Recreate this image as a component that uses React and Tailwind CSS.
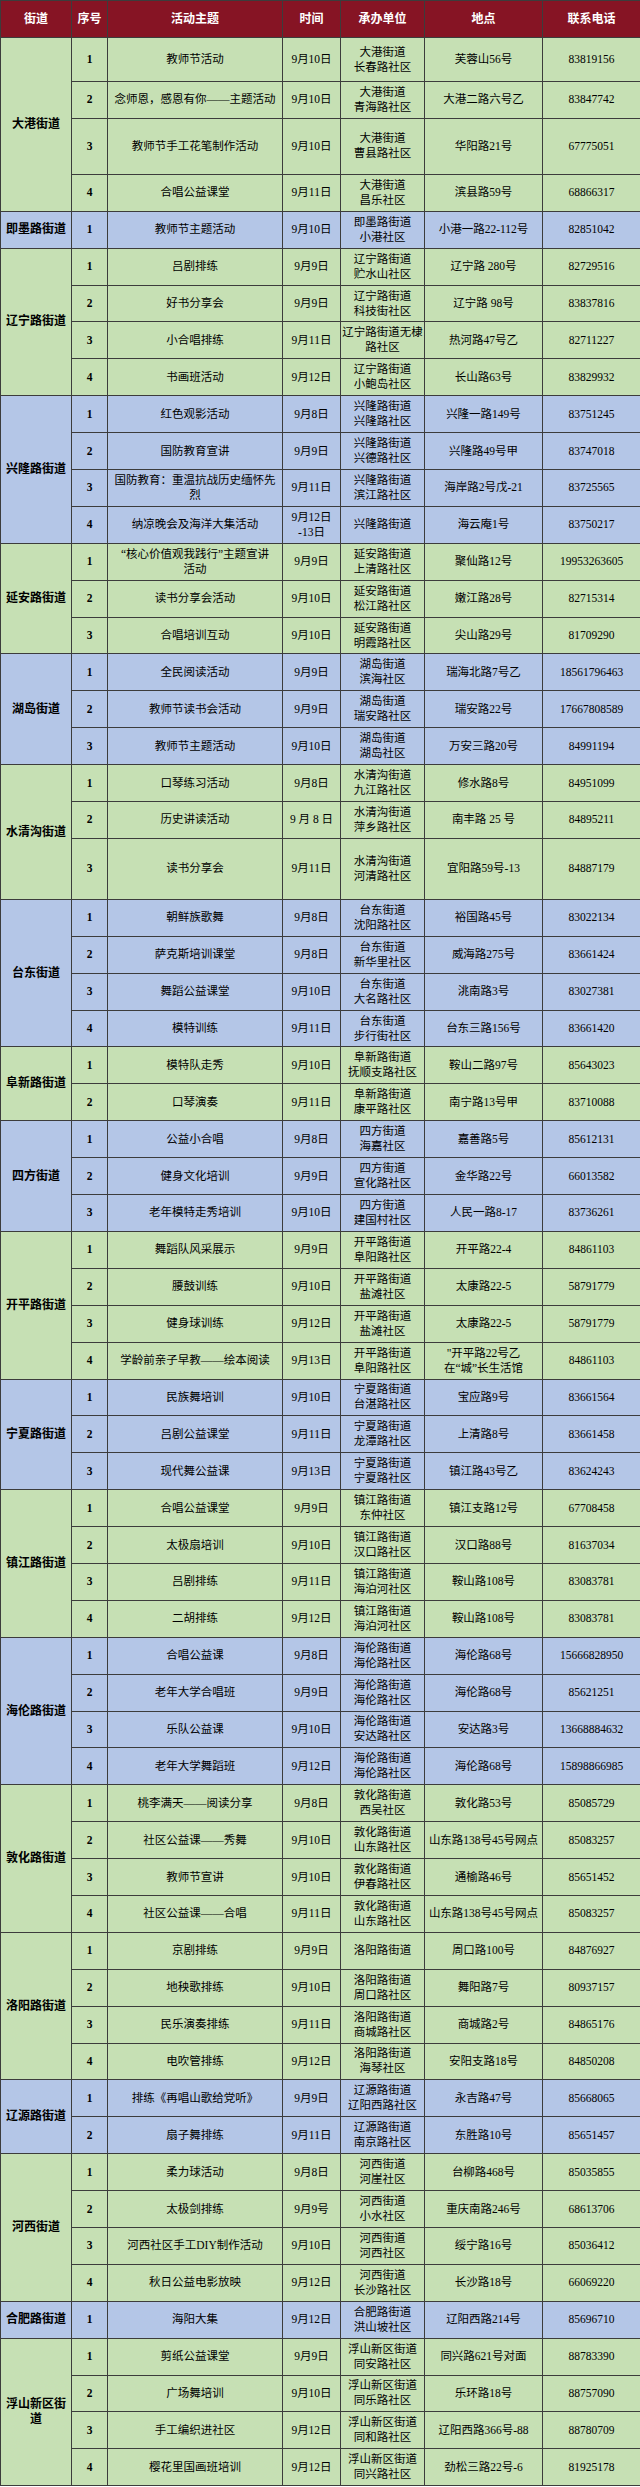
import React from 'react';

const GREEN = 'bg-[#c6e0b4]';
const BLUE = 'bg-[#b4c6e7]';

// each row: [主题, 时间, 承办单位, 地点, 电话, height class]
const sections = [
  {
    name: '大港街道',
    bg: GREEN,
    rows: [
      ['教师节活动', '9月10日', '大港街道\n长春路社区', '芙蓉山56号', '83819156', 'h-[44px]'],
      ['念师恩，感恩有你——主题活动', '9月10日', '大港街道\n青海路社区', '大港二路六号乙', '83847742'],
      ['教师节手工花笔制作活动', '9月10日', '大港街道\n曹县路社区', '华阳路21号', '67775051', 'h-[56px]'],
      ['合唱公益课堂', '9月11日', '大港街道\n昌乐社区', '滨县路59号', '68866317'],
    ],
  },
  {
    name: '即墨路街道',
    bg: BLUE,
    rows: [['教师节主题活动', '9月10日', '即墨路街道\n小港社区', '小港一路22-112号', '82851042']],
  },
  {
    name: '辽宁路街道',
    bg: GREEN,
    rows: [
      ['吕剧排练', '9月9日', '辽宁路街道\n贮水山社区', '辽宁路 280号', '82729516'],
      ['好书分享会', '9月9日', '辽宁路街道\n科技街社区', '辽宁路 98号', '83837816'],
      ['小合唱排练', '9月11日', '辽宁路街道无棣\n路社区', '热河路47号乙', '82711227'],
      ['书画班活动', '9月12日', '辽宁路街道\n小鲍岛社区', '长山路63号', '83829932'],
    ],
  },
  {
    name: '兴隆路街道',
    bg: BLUE,
    rows: [
      ['红色观影活动', '9月8日', '兴隆路街道\n兴隆路社区', '兴隆一路149号', '83751245'],
      ['国防教育宣讲', '9月9日', '兴隆路街道\n兴德路社区', '兴隆路49号甲', '83747018'],
      ['国防教育：重温抗战历史缅怀先\n烈', '9月11日', '兴隆路街道\n滨江路社区', '海岸路2号戊-21', '83725565'],
      ['纳凉晚会及海洋大集活动', '9月12日\n-13日', '兴隆路街道', '海云庵1号', '83750217'],
    ],
  },
  {
    name: '延安路街道',
    bg: GREEN,
    rows: [
      ['“核心价值观我践行”主题宣讲\n活动', '9月9日', '延安路街道\n上清路社区', '聚仙路12号', '19953263605'],
      ['读书分享会活动', '9月10日', '延安路街道\n松江路社区', '嫩江路28号', '82715314'],
      ['合唱培训互动', '9月10日', '延安路街道\n明霞路社区', '尖山路29号', '81709290'],
    ],
  },
  {
    name: '湖岛街道',
    bg: BLUE,
    rows: [
      ['全民阅读活动', '9月9日', '湖岛街道\n滨海社区', '瑞海北路7号乙', '18561796463'],
      ['教师节读书会活动', '9月9日', '湖岛街道\n瑞安路社区', '瑞安路22号', '17667808589'],
      ['教师节主题活动', '9月10日', '湖岛街道\n湖岛社区', '万安三路20号', '84991194'],
    ],
  },
  {
    name: '水清沟街道',
    bg: GREEN,
    rows: [
      ['口琴练习活动', '9月8日', '水清沟街道\n九江路社区', '修水路8号', '84951099'],
      ['历史讲读活动', '9 月 8 日', '水清沟街道\n萍乡路社区', '南丰路 25 号', '84895211'],
      ['读书分享会', '9月11日', '水清沟街道\n河清路社区', '宜阳路59号-13', '84887179', 'h-[61px]'],
    ],
  },
  {
    name: '台东街道',
    bg: BLUE,
    rows: [
      ['朝鲜族歌舞', '9月8日', '台东街道\n沈阳路社区', '裕国路45号', '83022134'],
      ['萨克斯培训课堂', '9月8日', '台东街道\n新华里社区', '威海路275号', '83661424'],
      ['舞蹈公益课堂', '9月10日', '台东街道\n大名路社区', '洮南路3号', '83027381'],
      ['模特训练', '9月11日', '台东街道\n步行街社区', '台东三路156号', '83661420'],
    ],
  },
  {
    name: '阜新路街道',
    bg: GREEN,
    rows: [
      ['模特队走秀', '9月10日', '阜新路街道\n抚顺支路社区', '鞍山二路97号', '85643023'],
      ['口琴演奏', '9月11日', '阜新路街道\n康平路社区', '南宁路13号甲', '83710088'],
    ],
  },
  {
    name: '四方街道',
    bg: BLUE,
    rows: [
      ['公益小合唱', '9月8日', '四方街道\n海嘉社区', '嘉善路5号', '85612131'],
      ['健身文化培训', '9月9日', '四方街道\n宣化路社区', '金华路22号', '66013582'],
      ['老年模特走秀培训', '9月10日', '四方街道\n建国村社区', '人民一路8-17', '83736261'],
    ],
  },
  {
    name: '开平路街道',
    bg: GREEN,
    rows: [
      ['舞蹈队风采展示', '9月9日', '开平路街道\n阜阳路社区', '开平路22-4', '84861103'],
      ['腰鼓训练', '9月10日', '开平路街道\n盐滩社区', '太康路22-5', '58791779'],
      ['健身球训练', '9月12日', '开平路街道\n盐滩社区', '太康路22-5', '58791779'],
      ['学龄前亲子早教——绘本阅读', '9月13日', '开平路街道\n阜阳路社区', '"开平路22号乙\n在“城”长生活馆', '84861103'],
    ],
  },
  {
    name: '宁夏路街道',
    bg: BLUE,
    rows: [
      ['民族舞培训', '9月10日', '宁夏路街道\n台湛路社区', '宝应路9号', '83661564'],
      ['吕剧公益课堂', '9月11日', '宁夏路街道\n龙潭路社区', '上清路8号', '83661458'],
      ['现代舞公益课', '9月13日', '宁夏路街道\n宁夏路社区', '镇江路43号乙', '83624243'],
    ],
  },
  {
    name: '镇江路街道',
    bg: GREEN,
    rows: [
      ['合唱公益课堂', '9月9日', '镇江路街道\n东仲社区', '镇江支路12号', '67708458'],
      ['太极扇培训', '9月10日', '镇江路街道\n汉口路社区', '汉口路88号', '81637034'],
      ['吕剧排练', '9月11日', '镇江路街道\n海泊河社区', '鞍山路108号', '83083781'],
      ['二胡排练', '9月12日', '镇江路街道\n海泊河社区', '鞍山路108号', '83083781'],
    ],
  },
  {
    name: '海伦路街道',
    bg: BLUE,
    rows: [
      ['合唱公益课', '9月8日', '海伦路街道\n海伦路社区', '海伦路68号', '15666828950'],
      ['老年大学合唱班', '9月9日', '海伦路街道\n海伦路社区', '海伦路68号', '85621251'],
      ['乐队公益课', '9月10日', '海伦路街道\n安达路社区', '安达路3号', '13668884632'],
      ['老年大学舞蹈班', '9月12日', '海伦路街道\n海伦路社区', '海伦路68号', '15898866985'],
    ],
  },
  {
    name: '敦化路街道',
    bg: GREEN,
    rows: [
      ['桃李满天——阅读分享', '9月8日', '敦化路街道\n西吴社区', '敦化路53号', '85085729'],
      ['社区公益课——秀舞', '9月10日', '敦化路街道\n山东路社区', '山东路138号45号网点', '85083257'],
      ['教师节宣讲', '9月10日', '敦化路街道\n伊春路社区', '通榆路46号', '85651452'],
      ['社区公益课——合唱', '9月11日', '敦化路街道\n山东路社区', '山东路138号45号网点', '85083257'],
    ],
  },
  {
    name: '洛阳路街道',
    bg: GREEN,
    rows: [
      ['京剧排练', '9月9日', '洛阳路街道', '周口路100号', '84876927'],
      ['地秧歌排练', '9月10日', '洛阳路街道\n周口路社区', '舞阳路7号', '80937157'],
      ['民乐演奏排练', '9月11日', '洛阳路街道\n商城路社区', '商城路2号', '84865176'],
      ['电吹管排练', '9月12日', '洛阳路街道\n海琴社区', '安阳支路18号', '84850208'],
    ],
  },
  {
    name: '辽源路街道',
    bg: BLUE,
    rows: [
      ['排练《再唱山歌给党听》', '9月9日', '辽源路街道\n辽阳西路社区', '永吉路47号', '85668065'],
      ['扇子舞排练', '9月11日', '辽源路街道\n南京路社区', '东胜路10号', '85651457'],
    ],
  },
  {
    name: '河西街道',
    bg: GREEN,
    rows: [
      ['柔力球活动', '9月8日', '河西街道\n河崖社区', '台柳路468号', '85035855'],
      ['太极剑排练', '9月9号', '河西街道\n小水社区', '重庆南路246号', '68613706'],
      ['河西社区手工DIY制作活动', '9月10日', '河西街道\n河西社区', '绥宁路16号', '85036412'],
      ['秋日公益电影放映', '9月12日', '河西街道\n长沙路社区', '长沙路18号', '66069220'],
    ],
  },
  {
    name: '合肥路街道',
    bg: BLUE,
    rows: [['海阳大集', '9月12日', '合肥路街道\n洪山坡社区', '辽阳西路214号', '85696710']],
  },
  {
    name: '浮山新区街\n道',
    bg: GREEN,
    rows: [
      ['剪纸公益课堂', '9月9日', '浮山新区街道\n同安路社区', '同兴路621号对面', '88783390'],
      ['广场舞培训', '9月10日', '浮山新区街道\n同乐路社区', '乐环路18号', '88757090'],
      ['手工编织进社区', '9月12日', '浮山新区街道\n同和路社区', '辽阳西路366号-88', '88780709'],
      ['樱花里国画班培训', '9月12日', '浮山新区街道\n同兴路社区', '劲松三路22号-6', '81925178'],
    ],
  },
];

const cell = 'border border-[#3c3c3c] p-0 text-center align-middle whitespace-pre-line leading-[15px]';
const headers = ['街道', '序号', '活动主题', '时间', '承办单位', '地点', '联系电话'];

export default function App() {
  return (
    <div className="w-[640px] bg-white">
      <table className="w-[640px] table-fixed border-collapse text-[11.5px] text-black font-['Liberation_Serif','Noto_Sans_CJK_SC',serif]">
        <colgroup>
          <col className="w-[71px]" />
          <col className="w-[36px]" />
          <col className="w-[175px]" />
          <col className="w-[58px]" />
          <col className="w-[84px]" />
          <col className="w-[118px]" />
          <col className="w-[98px]" />
        </colgroup>
        <thead>
          <tr className="h-[37px] bg-[#861424]">
            {headers.map((h) => (
              <th key={h} className={`${cell} text-white font-bold text-[12px]`}>
                {h}
              </th>
            ))}
          </tr>
        </thead>
        <tbody>
          {sections.map((s) =>
            s.rows.map((r, i) => (
              <tr key={s.name + i} className={`${r[5] || 'h-[36.9px]'} ${s.bg}`}>
                {i === 0 && (
                  <td rowSpan={s.rows.length} className={`${cell} font-bold text-[12px]`}>
                    {s.name}
                  </td>
                )}
                <td className={`${cell} font-bold`}>{i + 1}</td>
                <td className={cell}>{r[0]}</td>
                <td className={cell}>{r[1]}</td>
                <td className={cell}>{r[2]}</td>
                <td className={cell}>{r[3]}</td>
                <td className={cell}>{r[4]}</td>
              </tr>
            ))
          )}
        </tbody>
      </table>
    </div>
  );
}
